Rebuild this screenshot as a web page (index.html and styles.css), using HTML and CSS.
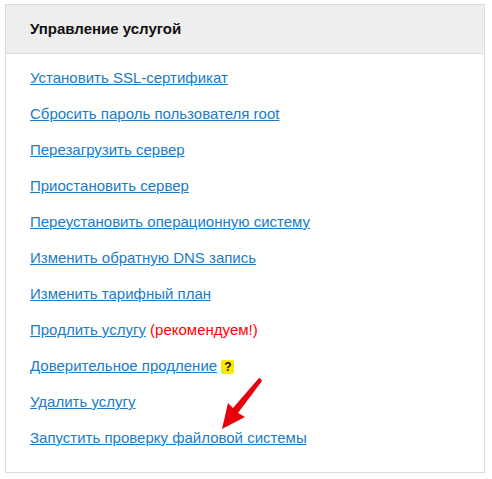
FILE: index.html
```html
<!DOCTYPE html>
<html lang="ru">
<head>
<meta charset="utf-8">
<link rel="stylesheet" href="styles.css">
</head>
<body>
<div class="panel">
  <div class="panel-head">Управление услугой</div>
  <ul class="actions">
    <li><a href="#">Установить SSL-сертификат</a></li>
    <li><a href="#">Сбросить пароль пользователя root</a></li>
    <li><a href="#">Перезагрузить сервер</a></li>
    <li><a href="#">Приостановить сервер</a></li>
    <li><a href="#">Переустановить операционную систему</a></li>
    <li><a href="#">Изменить обратную DNS запись</a></li>
    <li><a href="#">Изменить тарифный план</a></li>
    <li><a href="#">Продлить услугу</a> <span class="hot">(рекомендуем!)</span></li>
    <li><a href="#">Доверительное продление</a> <span class="help">?</span></li>
    <li><a href="#">Удалить услугу</a></li>
    <li class="last"><a href="#">Запустить проверку файловой системы</a>
      <svg class="arrow" width="44" height="54" viewBox="0 0 44 54">
        <path d="M40 1 L38 0 L12 30 L7 25 L1 51 L24 39 L17 35 L41 3 Z" fill="#e8000b"/>
      </svg>
    </li>
  </ul>
</div>
</body>
</html>
```
FILE: styles.css
```css
html, body {
  margin: 0;
  padding: 0;
  background: #fff;
}
body {
  font-family: "Liberation Sans", Arial, sans-serif;
  padding: 4px 0 0 5px;
}
.panel {
  width: 478px;
  border: 1px solid #dcdcdc;
  background: #fff;
}
.panel-head {
  background: #eeeeee;
  border-bottom: 1px solid #dcdcdc;
  height: 48px;
  line-height: 48px;
  padding-left: 24px;
  font-size: 15px;
  font-weight: bold;
  color: #111;
}
.actions {
  list-style: none;
  margin: 0;
  padding: 6px 0 16px 24px;
}
.actions li {
  height: 36px;
  line-height: 36px;
  font-size: 15px;
  position: relative;
}
.actions a {
  color: #1a7bc6;
  text-decoration: underline;
}
.hot {
  color: #f00;
}
.help {
  display: inline-block;
  width: 13px;
  height: 14px;
  line-height: 14px;
  background: #ffe600;
  border-radius: 2px;
  text-align: center;
  font-weight: bold;
  font-size: 12px;
  color: #111;
  vertical-align: 0;
}
.arrow {
  position: absolute;
  left: 191px;
  top: -42px;
}
```
